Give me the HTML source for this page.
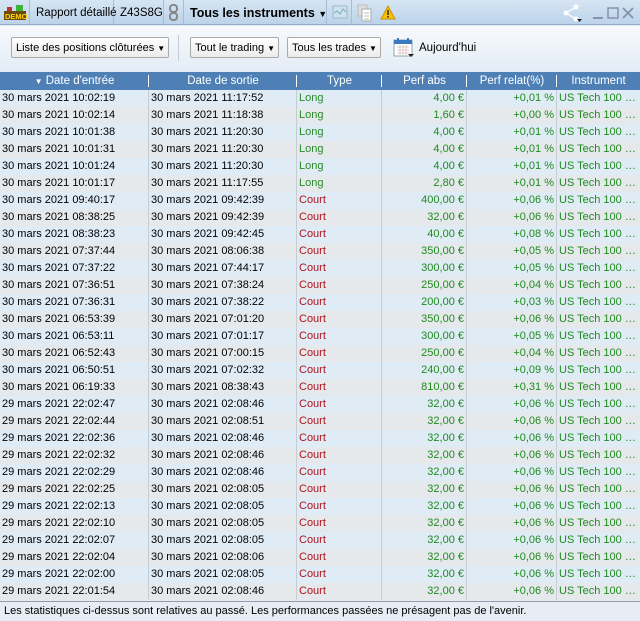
<!DOCTYPE html>
<html><head><meta charset="utf-8"><style>
*{margin:0;padding:0;box-sizing:border-box}
body{width:640px;height:621px;overflow:hidden;font-family:"Liberation Sans",sans-serif;font-size:11px;background:#e3ecf5;position:relative;color:#000}
#top{position:absolute;left:0;top:0;width:640px;height:25px;background:linear-gradient(#d6e5f3,#bcd3e9);border-bottom:1px solid #8fa9c6}
#top .t{position:absolute;top:0;height:25px;line-height:27px;border-right:1px solid #a5bdd6;white-space:nowrap;font-size:11.5px}
#top svg{position:absolute}
#tb{position:absolute;left:0;top:26px;width:640px;height:46px;background:linear-gradient(#f7fafd,#e3ecf5)}
.btn{position:absolute;top:11px;height:21px;line-height:20px;border:1px solid #a9a9a9;border-radius:2px;background:linear-gradient(#fff,#ebebeb);padding:0 3px 0 4px;font-size:11px;white-space:nowrap}
#hd{position:absolute;left:0;top:72px;width:640px;height:18px;background:#4e80b6;color:#fff}
#hd div{position:absolute;top:0;height:18px;line-height:19px;text-align:center;font-size:11.5px}
#hd i{position:absolute;top:3px;width:1px;height:12px;background:#fff}
#rows{position:absolute;left:0;top:90px;width:640px}
.r{height:17px;position:relative;white-space:nowrap}
.r:nth-child(odd){background:#dfecf6}.r:nth-child(even){background:#e6e9ec}
.r span{position:absolute;top:0;height:17px;line-height:17px;overflow:hidden;border-right:1px solid #c4ccd4;padding:0 2px;font-size:11px}
.c1{left:0;width:149px}.c2{left:149px;width:148px}.c3{left:297px;width:85px}.c4{left:382px;width:85px;text-align:right;color:#1f8a1f}.c5{left:467px;width:90px;text-align:right;color:#1f8a1f}.c6{left:557px;width:83px;color:#1f8a1f;border-right:none!important;text-overflow:ellipsis}
.L{color:#2a8a2a}.S{color:#b0141e}
#ft{position:absolute;left:0;top:601px;width:640px;height:20px;background:#e6edf4;border-top:1px solid #99a;line-height:18px;padding-left:4px;font-size:11px}
</style></head><body>
<div id="top">
<div class="t" style="left:0;width:30px"><svg width="28" height="25" viewBox="0 0 28 25"><rect x="4" y="11" width="22" height="9" fill="#6b4a12"/><rect x="16" y="5" width="7" height="6" fill="#3cb43c"/><rect x="7" y="7" width="5" height="4" fill="#c03030"/><text x="5" y="19" font-size="7.5" font-weight="bold" fill="#ffd400" font-family="Liberation Sans">DEMO</text></svg></div>
<div class="t" style="left:30px;width:84px;padding-left:6px">Rapport détaillé</div>
<div class="t" style="left:114px;width:50px;padding-left:6px">Z43S8G</div>
<div class="t" style="left:164px;width:20px"><svg width="20" height="25"><rect x="6" y="5" width="7" height="7" rx="3" fill="none" stroke="#888" stroke-width="2"/><rect x="6" y="13" width="7" height="7" rx="3" fill="none" stroke="#888" stroke-width="2"/></svg></div>
<div class="t" style="left:184px;width:143px;padding-left:6px;font-weight:bold;font-size:12.5px">Tous les instruments <span style="font-size:9px">▼</span></div>
<div class="t" style="left:327px;width:25px"><svg width="25" height="25"><rect x="6" y="6" width="14" height="12" fill="#cfe2f0" stroke="#9bc" /><path d="M7 13 L10 11 L13 14 L16 9 L19 12" stroke="#7ab" fill="none"/></svg></div>
<svg style="left:357px;top:4px" width="16" height="18"><rect x="1" y="1" width="9" height="11" fill="#ddd" stroke="#bbb"/><rect x="5" y="5" width="9" height="12" fill="#fff" stroke="#aaa"/><path d="M7 9h5M7 12h5M7 15h5" stroke="#bbb"/></svg>
<svg style="left:380px;top:5px" width="16" height="15"><path d="M8 1 L15 14 L1 14 Z" fill="#f5c400" stroke="#d09000"/><rect x="7.2" y="5" width="1.6" height="5" fill="#333"/><rect x="7.2" y="11" width="1.6" height="1.6" fill="#333"/></svg>
<svg style="left:563px;top:4px" width="20" height="18"><circle cx="3" cy="9" r="2.5" fill="#fff"/><circle cx="13" cy="3" r="2.5" fill="#fff"/><circle cx="13" cy="15" r="2.5" fill="#fff"/><path d="M3 9L13 3M3 9L13 15" stroke="#fff" stroke-width="1.3"/><path d="M14 15h5l-2.5 3z" fill="#222"/></svg>
<svg style="left:592px;top:6px" width="44" height="14"><rect x="1" y="11" width="10" height="2" fill="#8494a8"/><rect x="16" y="2" width="10" height="10" fill="none" stroke="#8494a8" stroke-width="1.5"/><path d="M31 2L41 12M41 2L31 12" stroke="#8494a8" stroke-width="1.8"/></svg>
</div>
<div id="tb">
<div class="btn" style="left:11px">Liste des positions clôturées <span style="font-size:8px">▼</span></div>
<div style="position:absolute;left:178px;top:9px;width:1px;height:26px;background:#c5ccd4"></div>
<div class="btn" style="left:190px">Tout le trading <span style="font-size:8px">▼</span></div>
<div class="btn" style="left:287px">Tous les trades <span style="font-size:8px">▼</span></div>
<svg style="position:absolute;left:393px;top:11px" width="22" height="22"><rect x="1" y="3" width="18" height="16" fill="#fff" stroke="#8aa"/><rect x="1" y="3" width="18" height="4" fill="#3a78c0"/><rect x="4" y="1" width="2" height="4" fill="#3a78c0"/><rect x="14" y="1" width="2" height="4" fill="#3a78c0"/><path d="M4 10h12M4 13h12M4 16h12M7 8v10M10 8v10M13 8v10" stroke="#d8b8b8" stroke-width=".7"/><path d="M15 17h6l-3 3z" fill="#222"/></svg>
<div style="position:absolute;left:419px;top:16px;font-size:11.5px">Aujourd'hui</div>
</div>
<div id="hd">
<div style="left:0;width:149px"><span style="font-size:8px">▼</span> Date d'entrée</div><i style="left:148px"></i>
<div style="left:149px;width:148px">Date de sortie</div><i style="left:296px"></i>
<div style="left:297px;width:85px">Type</div><i style="left:381px"></i>
<div style="left:382px;width:85px">Perf abs</div><i style="left:466px"></i>
<div style="left:467px;width:90px">Perf relat(%)</div><i style="left:556px"></i>
<div style="left:557px;width:83px">Instrument</div>
</div>
<div id="rows"></div>
<div id="ft">Les statistiques ci-dessus sont relatives au passé. Les performances passées ne présagent pas de l'avenir.</div>
<script>
var d=[["30 mars 2021 10:02:19","30 mars 2021 11:17:52","L","4,00","+0,01"],
["30 mars 2021 10:02:14","30 mars 2021 11:18:38","L","1,60","+0,00"],
["30 mars 2021 10:01:38","30 mars 2021 11:20:30","L","4,00","+0,01"],
["30 mars 2021 10:01:31","30 mars 2021 11:20:30","L","4,00","+0,01"],
["30 mars 2021 10:01:24","30 mars 2021 11:20:30","L","4,00","+0,01"],
["30 mars 2021 10:01:17","30 mars 2021 11:17:55","L","2,80","+0,01"],
["30 mars 2021 09:40:17","30 mars 2021 09:42:39","S","400,00","+0,06"],
["30 mars 2021 08:38:25","30 mars 2021 09:42:39","S","32,00","+0,06"],
["30 mars 2021 08:38:23","30 mars 2021 09:42:45","S","40,00","+0,08"],
["30 mars 2021 07:37:44","30 mars 2021 08:06:38","S","350,00","+0,05"],
["30 mars 2021 07:37:22","30 mars 2021 07:44:17","S","300,00","+0,05"],
["30 mars 2021 07:36:51","30 mars 2021 07:38:24","S","250,00","+0,04"],
["30 mars 2021 07:36:31","30 mars 2021 07:38:22","S","200,00","+0,03"],
["30 mars 2021 06:53:39","30 mars 2021 07:01:20","S","350,00","+0,06"],
["30 mars 2021 06:53:11","30 mars 2021 07:01:17","S","300,00","+0,05"],
["30 mars 2021 06:52:43","30 mars 2021 07:00:15","S","250,00","+0,04"],
["30 mars 2021 06:50:51","30 mars 2021 07:02:32","S","240,00","+0,09"],
["30 mars 2021 06:19:33","30 mars 2021 08:38:43","S","810,00","+0,31"],
["29 mars 2021 22:02:47","30 mars 2021 02:08:46","S","32,00","+0,06"],
["29 mars 2021 22:02:44","30 mars 2021 02:08:51","S","32,00","+0,06"],
["29 mars 2021 22:02:36","30 mars 2021 02:08:46","S","32,00","+0,06"],
["29 mars 2021 22:02:32","30 mars 2021 02:08:46","S","32,00","+0,06"],
["29 mars 2021 22:02:29","30 mars 2021 02:08:46","S","32,00","+0,06"],
["29 mars 2021 22:02:25","30 mars 2021 02:08:05","S","32,00","+0,06"],
["29 mars 2021 22:02:13","30 mars 2021 02:08:05","S","32,00","+0,06"],
["29 mars 2021 22:02:10","30 mars 2021 02:08:05","S","32,00","+0,06"],
["29 mars 2021 22:02:07","30 mars 2021 02:08:05","S","32,00","+0,06"],
["29 mars 2021 22:02:04","30 mars 2021 02:08:06","S","32,00","+0,06"],
["29 mars 2021 22:02:00","30 mars 2021 02:08:05","S","32,00","+0,06"],
["29 mars 2021 22:01:54","30 mars 2021 02:08:46","S","32,00","+0,06"]];
var h="";d.forEach(function(r){h+='<div class="r"><span class="c1">'+r[0]+'</span><span class="c2">'+r[1]+'</span><span class="c3 '+r[2]+'">'+(r[2]=="L"?"Long":"Court")+'</span><span class="c4">'+r[3]+' €</span><span class="c5">'+r[4]+' %</span><span class="c6">US Tech 100 C...</span></div>'});
document.getElementById("rows").innerHTML=h;
</script>
</body></html>
